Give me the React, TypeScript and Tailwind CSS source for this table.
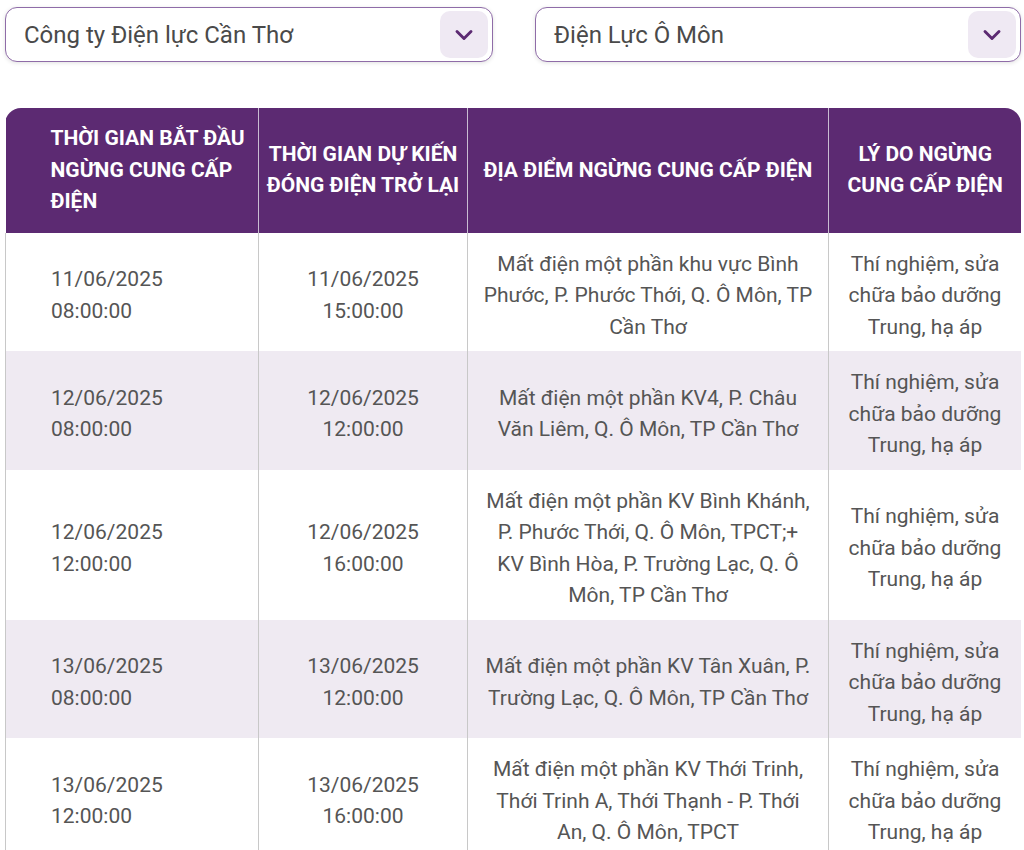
import React from 'react';
import { ChevronDown } from 'lucide-react';

const rows = [
  {
    start: ['11/06/2025', '08:00:00'],
    end: ['11/06/2025', '15:00:00'],
    place: 'Mất điện một phần khu vực Bình Phước, P. Phước Thới, Q. Ô Môn, TP Cần Thơ',
    reason: 'Thí nghiệm, sửa chữa bảo dưỡng Trung, hạ áp',
  },
  {
    start: ['12/06/2025', '08:00:00'],
    end: ['12/06/2025', '12:00:00'],
    place: 'Mất điện một phần KV4, P. Châu Văn Liêm, Q. Ô Môn, TP Cần Thơ',
    reason: 'Thí nghiệm, sửa chữa bảo dưỡng Trung, hạ áp',
  },
  {
    start: ['12/06/2025', '12:00:00'],
    end: ['12/06/2025', '16:00:00'],
    place: 'Mất điện một phần KV Bình Khánh, P. Phước Thới, Q. Ô Môn, TPCT;+ KV Bình Hòa, P. Trường Lạc, Q. Ô Môn, TP Cần Thơ',
    reason: 'Thí nghiệm, sửa chữa bảo dưỡng Trung, hạ áp',
  },
  {
    start: ['13/06/2025', '08:00:00'],
    end: ['13/06/2025', '12:00:00'],
    place: 'Mất điện một phần KV Tân Xuân, P. Trường Lạc, Q. Ô Môn, TP Cần Thơ',
    reason: 'Thí nghiệm, sửa chữa bảo dưỡng Trung, hạ áp',
  },
  {
    start: ['13/06/2025', '12:00:00'],
    end: ['13/06/2025', '16:00:00'],
    place: 'Mất điện một phần KV Thới Trinh, Thới Trinh A, Thới Thạnh - P. Thới An, Q. Ô Môn, TPCT',
    reason: 'Thí nghiệm, sửa chữa bảo dưỡng Trung, hạ áp',
  },
];

function Select({ label }: { label: string }) {
  return (
    <div className="flex h-[55px] items-center justify-between rounded-xl border border-[#8f6ca8] bg-white pl-[18px] pr-1 shadow-[0_1px_4px_rgba(0,0,0,0.12)]">
      <span className="text-[24px] text-[#4a4a4a]">{label}</span>
      <div className="flex h-[47px] w-[48px] items-center justify-center rounded-[10px] bg-[#efe9f3]">
        <ChevronDown className="h-7 w-7 text-[#5c2a72]" strokeWidth={2.5} />
      </div>
    </div>
  );
}

export default function App() {
  return (
    <div className="min-h-screen bg-white pl-[5px] pr-[3px] pt-[7px] font-['Roboto',sans-serif]">
      <div className="grid grid-cols-[488px_486px] gap-[42px]">
        <Select label="Công ty Điện lực Cần Thơ" />
        <Select label="Điện Lực Ô Môn" />
      </div>

      <div className="mt-[46px] overflow-hidden rounded-t-2xl">
        <table className="w-full table-fixed border-collapse text-[21px] leading-[31.5px]">
          <colgroup>
            <col className="w-[253px]" />
            <col className="w-[209px]" />
            <col className="w-[361px]" />
            <col className="w-[193px]" />
          </colgroup>
          <thead>
            <tr className="bg-[#5c2a72] font-bold uppercase text-white">
              <th className="py-[15px] pl-[45px] pr-2 text-left">Thời gian bắt đầu ngừng cung cấp điện</th>
              <th className="border-l border-[#c9bdd2] px-[4px] py-[15px] text-center">Thời gian dự kiến đóng điện trở lại</th>
              <th className="border-l border-[#c9bdd2] px-2 py-[15px] text-center">Địa điểm ngừng cung cấp điện</th>
              <th className="border-l border-[#c9bdd2] px-2 py-[15px] text-center">Lý do ngừng cung cấp điện</th>
            </tr>
          </thead>
          <tbody className="text-[#555]">
            {rows.map((r, i) => (
              <tr key={i} className={i % 2 === 1 ? 'bg-[#efeaf2]' : 'bg-white'}>
                <td className="border-x border-[#c8c8c8] pb-2 pl-[45px] pr-3 pt-4 text-left">
                  {r.start[0]}
                  <br />
                  {r.start[1]}
                </td>
                <td className="border-x border-[#c8c8c8] px-3 pb-2 pt-4 text-center">
                  {r.end[0]}
                  <br />
                  {r.end[1]}
                </td>
                <td className="border-x border-[#c8c8c8] px-[14px] pb-2 pt-4 text-center">{r.place}</td>
                <td className="border-x border-[#c8c8c8] px-4 pb-2 pt-4 text-center">{r.reason}</td>
              </tr>
            ))}
          </tbody>
        </table>
      </div>
    </div>
  );
}
